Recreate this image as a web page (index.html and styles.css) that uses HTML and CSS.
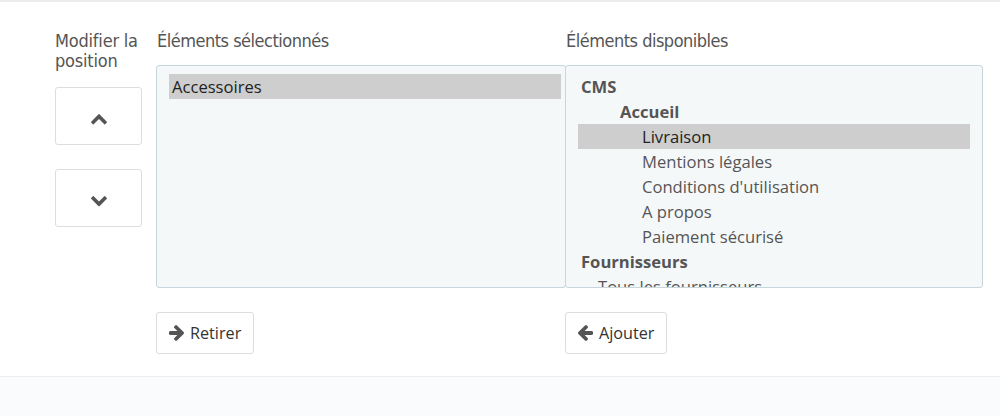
FILE: index.html
```html
<!DOCTYPE html>
<html lang="fr">
<head>
<meta charset="utf-8">
<title>Position</title>
<link rel="stylesheet" href="styles.css">
</head>
<body>
<div class="page">
  <div class="panel-body">
    <div class="col col-pos">
      <div class="label label-two">Modifier la position</div>
      <button class="btn btn-move" type="button" aria-label="Monter">
        <svg class="chev" viewBox="90 480 1612 1035" width="16" height="10.5"><path d="M1683 1331l-166 165q-19 19-45 19t-45-19l-531-531-531 531q-19 19-45 19t-45-19l-166-165q-19-19-19-45.5t19-45.5l742-741q19-19 45-19t45 19l742 741q19 19 19 45.5t-19 45.5z"/></svg>
      </button>
      <button class="btn btn-move btn-down" type="button" aria-label="Descendre">
        <svg class="chev flip-v" viewBox="90 480 1612 1035" width="16" height="10.5"><path d="M1683 1331l-166 165q-19 19-45 19t-45-19l-531-531-531 531q-19 19-45 19t-45-19l-166-165q-19-19-19-45.5t19-45.5l742-741q19-19 45-19t45 19l742 741q19 19 19 45.5t-19 45.5z"/></svg>
      </button>
    </div>
    <div class="col col-sel">
      <div class="label">Éléments sélectionnés</div>
      <div class="select">
        <div class="opt selected">Accessoires</div>
      </div>
      <button class="btn btn-action" type="button">
        <svg class="arrow" viewBox="128 181 1472 1558" width="15" height="16"><path d="M1600 960q0 54-37 91l-651 651q-39 37-91 37-51 0-90-37l-75-75q-38-38-38-91t38-91l293-293h-704q-52 0-84.5-37.5t-32.5-90.5v-128q0-53 32.5-90.5t84.5-37.5h704l-293-294q-38-36-38-90t38-90l75-75q38-38 90-38 53 0 91 38l651 651q37 35 37 90z"/></svg>
        <span>Retirer</span>
      </button>
    </div>
    <div class="col col-avail">
      <div class="label">Éléments disponibles</div>
      <div class="select select-avail">
        <div class="opt group">CMS</div>
        <div class="opt group lvl1">Accueil</div>
        <div class="opt selected lvl2">Livraison</div>
        <div class="opt lvl2">Mentions légales</div>
        <div class="opt lvl2">Conditions d'utilisation</div>
        <div class="opt lvl2">A propos</div>
        <div class="opt lvl2">Paiement sécurisé</div>
        <div class="opt group">Fournisseurs</div>
        <div class="opt lvl-s">Tous les fournisseurs</div>
      </div>
      <button class="btn btn-action btn-add" type="button">
        <svg class="arrow flip-h" viewBox="128 181 1472 1558" width="15" height="16"><path d="M1600 960q0 54-37 91l-651 651q-39 37-91 37-51 0-90-37l-75-75q-38-38-38-91t38-91l293-293h-704q-52 0-84.5-37.5t-32.5-90.5v-128q0-53 32.5-90.5t84.5-37.5h704l-293-294q-38-36-38-90t38-90l75-75q38-38 90-38 53 0 91 38l651 651q37 35 37 90z"/></svg>
        <span>Ajouter</span>
      </button>
    </div>
  </div>
  <div class="panel-footer"></div>
</div>
</body>
</html>
```

FILE: styles.css
```css
* { box-sizing: border-box; }

html, body {
  margin: 0;
  padding: 0;
  background: #ffffff;
}

body {
  font-family: "Open Sans", "Liberation Sans", sans-serif;
  color: #555555;
  width: 1000px;
  height: 416px;
  overflow: hidden;
}

.page {
  border-top: 2px solid #ececec;
}

.panel-body {
  display: flex;
  align-items: flex-start;
  padding: 29px 0 0 55px;
  height: 374px;
}

.col {
  display: flex;
  flex-direction: column;
  align-items: flex-start;
}

.col-pos {
  width: 87px;
  margin-right: 14px;
}

.col-sel {
  width: 410px;
}

.col-avail {
  width: 418px;
  margin-left: -1px;
}

.label {
  font-family: "DejaVu Sans Condensed", "DejaVu Sans", sans-serif;
  font-stretch: condensed;
  font-size: 18px;
  letter-spacing: -0.5px;
  line-height: 20px;
  height: 20px;
  color: #555555;
  margin: 0 0 14px 1px;
  white-space: nowrap;
}

.label-two {
  white-space: normal;
  height: 40px;
  margin: 0 0 16px 0;
  width: 92px;
  letter-spacing: -0.2px;
}

.btn {
  font-family: "Open Sans", "Liberation Sans", sans-serif;
  background: #ffffff;
  border: 1px solid #dddddd;
  border-radius: 3px;
  color: #333333;
  cursor: pointer;
  padding: 0;
}

.btn-move {
  width: 87px;
  height: 58px;
  display: flex;
  align-items: center;
  justify-content: center;
  padding-top: 7px;
}

.btn-down {
  margin-top: 24px;
}

.chev {
  fill: #555555;
  display: block;
}

.flip-v { transform: scaleY(-1); }
.flip-h { transform: scaleX(-1); }

.select {
  width: 100%;
  height: 223px;
  background: #f5f8f9;
  border: 1px solid #c7d6db;
  border-radius: 3px;
  padding: 8px 4px 0 12px;
  overflow: hidden;
}

.select-avail {
  padding-right: 12px;
}

.opt {
  height: 25px;
  line-height: 25px;
  font-size: 16.6px;
  color: #555555;
  padding-left: 3px;
  white-space: nowrap;
}

.opt.selected {
  background: #cecece;
  color: #222222;
}

.opt.group {
  font-weight: bold;
  color: #555555;
}

.lvl1 { padding-left: 42px; }
.lvl2 { padding-left: 64px; }
.lvl-s { padding-left: 20px; }

.btn-action {
  margin-top: 24px;
  height: 42px;
  display: inline-flex;
  align-items: center;
  gap: 6px;
  padding: 0 12px 0 12px;
  font-size: 16.2px;
  color: #333333;
}

.btn-add {
  padding-left: 12px;
}

.arrow {
  fill: #555555;
  display: block;
}

.panel-footer {
  border-top: 1px solid #eeeeee;
  background: #fafbfc;
  height: 40px;
}
```
